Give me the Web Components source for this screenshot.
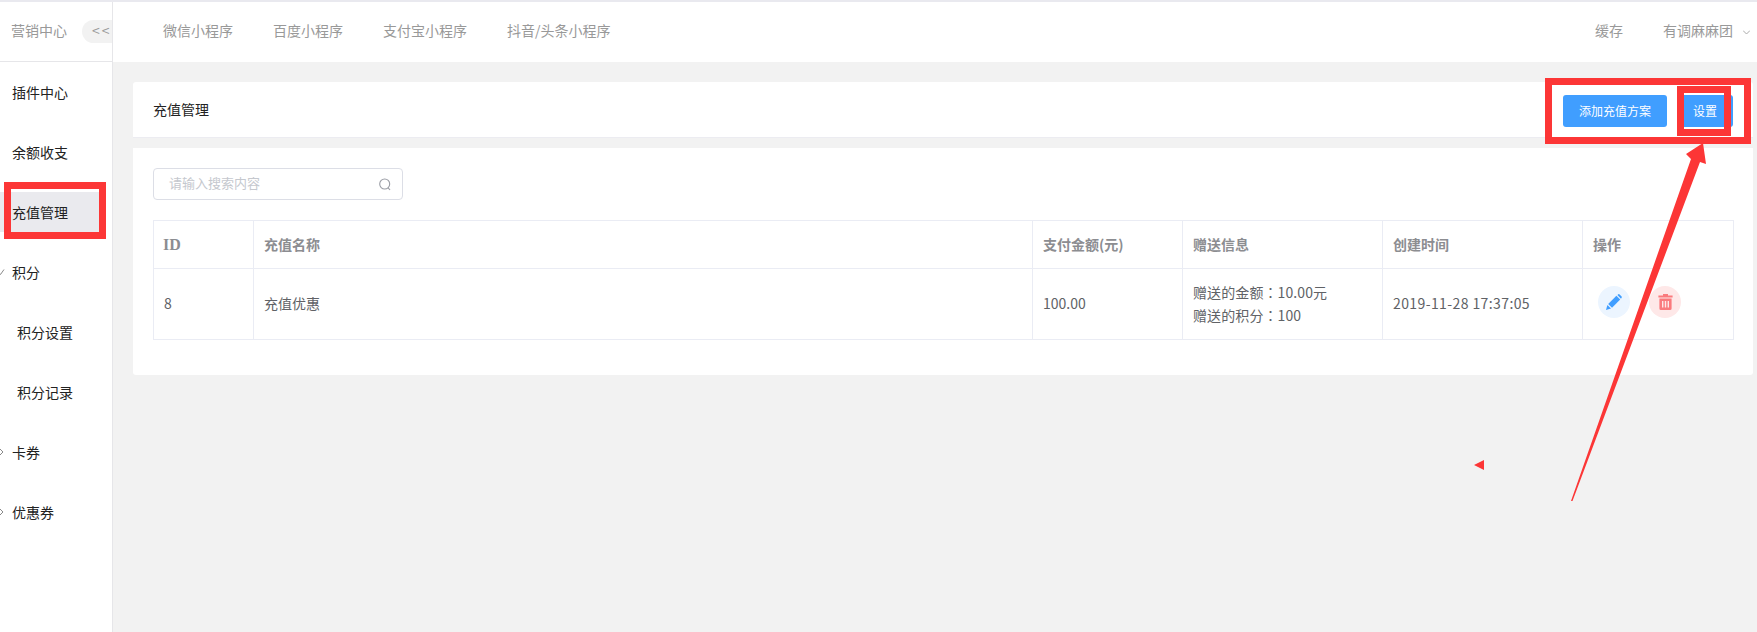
<!DOCTYPE html>
<html lang="zh">
<head>
<meta charset="utf-8">
<title>充值管理</title>
<style>
  html, body {
    margin: 0;
    height: 632px;
    overflow: hidden;
    background: #f2f2f2;
    font-family: "Noto Sans CJK SC", "Noto Sans", sans-serif;
    font-size: 14px;
  }
</style>
</head>
<body>
<app-shell>
  <side-bar slot="side">
    <side-item>插件中心</side-item>
    <side-item>余额收支</side-item>
    <side-item active>充值管理</side-item>
    <side-item arrow="down">积分</side-item>
    <side-item sub>积分设置</side-item>
    <side-item sub>积分记录</side-item>
    <side-item arrow="right">卡券</side-item>
    <side-item arrow="right">优惠券</side-item>
  </side-bar>
  <top-bar slot="top"></top-bar>
  <page-head>
    <span>充值管理</span>
    <blue-button slot="actions">添加充值方案</blue-button>
    <blue-button slot="actions">设置</blue-button>
  </page-head>
  <page-card>
    <search-box placeholder="请输入搜索内容"></search-box>
    <recharge-table></recharge-table>
  </page-card>
</app-shell>
<mark-up></mark-up>

<script>
const shellTemplate = document.createElement("template");
shellTemplate.innerHTML = /*html*/`
  <style>
    :host {
      display: flex;
      height: 630px;
      border-top: 2px solid #e9e9ef;
    }
    .right {
      flex: 1;
      min-width: 0;
      display: flex;
      flex-direction: column;
    }
    main {
      flex: 1;
      display: flex;
      flex-direction: column;
      gap: 10px;
      padding: 20px 4px 0 20px;
    }
  </style>
  <slot name="side"></slot>
  <div class="right">
    <slot name="top"></slot>
    <main><slot></slot></main>
  </div>`;

class AppShell extends HTMLElement {
  constructor() {
    super();
    this.attachShadow({ mode: "open" });
    this.shadowRoot.appendChild(shellTemplate.content.cloneNode(true));
  }
}
customElements.define("app-shell", AppShell);

const sideTemplate = document.createElement("template");
sideTemplate.innerHTML = /*html*/`
  <style>
    :host {
      display: block;
      width: 112px;
      flex: none;
      background: #fff;
      border-right: 1px solid #e6e6e9;
    }
    .head {
      height: 59px;
      box-sizing: content-box;
      border-bottom: 1px solid #e6e6e9;
      display: flex;
      align-items: center;
      justify-content: space-between;
      padding-left: 11px;
      color: #999;
    }
    .head > span:first-child {
      margin-bottom: 4px;
    }
    .fold {
      width: 30px;
      height: 23px;
      line-height: 21px;
      background: #f2f2f2;
      border-radius: 12px 0 0 12px;
      padding-left: 10px;
      box-sizing: border-box;
      font-size: 14px;
      letter-spacing: 2px;
      white-space: nowrap;
      margin-bottom: 1px;
    }
    .list {
      padding-top: 1px;
    }
  </style>
  <div class="head">
    <span>营销中心</span>
    <span class="fold">&lt;&lt;</span>
  </div>
  <div class="list"><slot></slot></div>`;

class SideBar extends HTMLElement {
  constructor() {
    super();
    this.attachShadow({ mode: "open" });
    this.shadowRoot.appendChild(sideTemplate.content.cloneNode(true));
  }
}
customElements.define("side-bar", SideBar);

const sideItemTemplate = document.createElement("template");
sideItemTemplate.innerHTML = /*html*/`
  <style>
    :host {
      display: flex;
      align-items: center;
      height: 60px;
      color: #222;
      position: relative;
    }
    .label {
      height: 40px;
      line-height: 38px;
      padding-left: 12px;
      width: 100px;
      box-sizing: border-box;
      margin-top: -1px;
    }
    :host([sub]) .label {
      padding-left: 17px;
    }
    :host([active]) .label {
      background: #eaeaee;
      margin-top: -2px;
      line-height: 41px;
    }
    svg {
      position: absolute;
      left: 0;
      top: 25px;
      display: none;
    }
    :host([arrow]) svg {
      display: block;
    }
  </style>
  <svg width="6" height="8" viewBox="0 0 6 8" fill="none" stroke="#8a8a8a" stroke-width="1"><path id="arrow" d=""/></svg>
  <div class="label"><slot></slot></div>`;

class SideItem extends HTMLElement {
  constructor() {
    super();
    this.attachShadow({ mode: "open" });
    this.shadowRoot.appendChild(sideItemTemplate.content.cloneNode(true));
  }

  connectedCallback() {
    const arrow = this.getAttribute("arrow");
    if (arrow) {
      this.shadowRoot.getElementById("arrow").setAttribute("d", arrow === "down" ? "M-2 3.5 L0.5 6.5 L4 1.5" : "M0 1 L3 4 L0 7");
    }
  }
}
customElements.define("side-item", SideItem);

const topTemplate = document.createElement("template");
topTemplate.innerHTML = /*html*/`
  <style>
    :host {
      display: flex;
      align-items: center;
      justify-content: space-between;
      height: 60px;
      box-sizing: border-box;
      flex: none;
      background: #fff;
      color: #999;
      padding: 0 7px 4px 50px;
    }
    .group {
      display: flex;
      align-items: center;
      gap: 40px;
    }
    .user {
      display: flex;
      align-items: center;
      gap: 10px;
    }
    .user svg {
      margin-top: 4px;
    }
  </style>
  <div class="group">
    <span>微信小程序</span>
    <span>百度小程序</span>
    <span>支付宝小程序</span>
    <span>抖音/头条小程序</span>
  </div>
  <div class="group">
    <span>缓存</span>
    <span class="user">
      <span>有调麻麻团</span>
      <svg width="7" height="5" viewBox="0 0 7 5" fill="none" stroke="#aaa" stroke-width="1"><path d="M0 0.5 L3.5 4 L7 0.5"/></svg>
    </span>
  </div>`;

class TopBar extends HTMLElement {
  constructor() {
    super();
    this.attachShadow({ mode: "open" });
    this.shadowRoot.appendChild(topTemplate.content.cloneNode(true));
  }
}
customElements.define("top-bar", TopBar);

const headTemplate = document.createElement("template");
headTemplate.innerHTML = /*html*/`
  <style>
    :host {
      display: flex;
      align-items: center;
      justify-content: space-between;
      height: 55px;
      flex: none;
      background: #fff;
      border-radius: 3px 3px 0 0;
      border-bottom: 1px solid #ececf1;
      padding: 0 20px;
      color: #222;
    }
    ::slotted(span) {
      margin-bottom: 2px;
    }
    .actions {
      display: flex;
      gap: 10px;
      margin-top: 3px;
    }
  </style>
  <slot></slot>
  <div class="actions"><slot name="actions"></slot></div>`;

class PageHead extends HTMLElement {
  constructor() {
    super();
    this.attachShadow({ mode: "open" });
    this.shadowRoot.appendChild(headTemplate.content.cloneNode(true));
  }
}
customElements.define("page-head", PageHead);

const buttonTemplate = document.createElement("template");
buttonTemplate.innerHTML = /*html*/`
  <style>
    :host {
      display: block;
      height: 32px;
      line-height: 31px;
      padding: 0 16px;
      background: #409eff;
      border-radius: 3px;
      color: #fff;
      font-size: 12px;
    }
  </style>
  <slot></slot>`;

class BlueButton extends HTMLElement {
  constructor() {
    super();
    this.attachShadow({ mode: "open" });
    this.shadowRoot.appendChild(buttonTemplate.content.cloneNode(true));
  }
}
customElements.define("blue-button", BlueButton);

const cardTemplate = document.createElement("template");
cardTemplate.innerHTML = /*html*/`
  <style>
    :host {
      display: flex;
      flex-direction: column;
      gap: 20px;
      height: 187px;
      flex: none;
      background: #fff;
      border-radius: 0 0 3px 3px;
      padding: 20px;
    }
  </style>
  <slot></slot>`;

class PageCard extends HTMLElement {
  constructor() {
    super();
    this.attachShadow({ mode: "open" });
    this.shadowRoot.appendChild(cardTemplate.content.cloneNode(true));
  }
}
customElements.define("page-card", PageCard);

const searchTemplate = document.createElement("template");
searchTemplate.innerHTML = /*html*/`
  <style>
    :host {
      display: flex;
      align-items: center;
      justify-content: space-between;
      width: 250px;
      height: 32px;
      box-sizing: border-box;
      border: 1px solid #dcdee6;
      border-radius: 4px;
      padding: 0 11px 0 15px;
      color: #c5c8ce;
      font-size: 13px;
    }
    #hint {
      margin-bottom: 3px;
    }
  </style>
  <span id="hint"></span>
  <svg width="12" height="13" viewBox="0 0 12 13" fill="none" stroke="#9a9da5" stroke-width="1.1">
    <circle cx="5.7" cy="6" r="5"/>
    <path d="M9.2 9.8 L11 12"/>
  </svg>`;

class SearchBox extends HTMLElement {
  constructor() {
    super();
    this.attachShadow({ mode: "open" });
    this.shadowRoot.appendChild(searchTemplate.content.cloneNode(true));
  }

  connectedCallback() {
    this.shadowRoot.getElementById("hint").textContent = this.getAttribute("placeholder");
  }
}
customElements.define("search-box", SearchBox);

const tableTemplate = document.createElement("template");
tableTemplate.innerHTML = /*html*/`
  <style>
    :host {
      display: block;
    }
    table {
      width: 1580px;
      table-layout: fixed;
      border-collapse: collapse;
      color: #606266;
    }
    th, td {
      border: 1px solid #eaecf4;
      padding: 0 0 0 10px;
      text-align: left;
      box-sizing: border-box;
    }
    th {
      height: 48px;
      padding-bottom: 2px;
      color: #8c8d91;
      font-weight: 700;
    }
    td {
      height: 71px;
      line-height: 23px;
      padding-bottom: 2px;
    }
    th.id {
      font-family: "Liberation Serif", serif;
      font-size: 16px;
      padding-left: 9px;
      padding-bottom: 0;
    }
    .gift {
      padding-bottom: 0;
      letter-spacing: 0.1px;
    }
    .gift i {
      font-style: normal;
      font-family: "Noto Sans CJK TC", sans-serif;
    }
    .time {
      letter-spacing: 0.4px;
    }
    .op-cell {
      padding-bottom: 0;
    }
    .ops {
      display: flex;
      gap: 19px;
      padding-left: 5px;
      margin-bottom: 5px;
    }
  </style>
  <table>
    <colgroup>
      <col style="width:100px">
      <col style="width:779px">
      <col style="width:150px">
      <col style="width:200px">
      <col style="width:200px">
      <col style="width:151px">
    </colgroup>
    <thead>
      <tr>
        <th class="id">ID</th>
        <th>充值名称</th>
        <th>支付金额(元)</th>
        <th>赠送信息</th>
        <th>创建时间</th>
        <th>操作</th>
      </tr>
    </thead>
    <tbody>
      <tr>
        <td>8</td>
        <td>充值优惠</td>
        <td>100.00</td>
        <td class="gift">赠送的金额<i lang="zh-TW">：</i>10.00元<br>赠送的积分<i lang="zh-TW">：</i>100</td>
        <td class="time">2019-11-28 17:37:05</td>
        <td class="op-cell">
          <div class="ops">
            <round-button kind="edit"></round-button>
            <round-button kind="delete"></round-button>
          </div>
        </td>
      </tr>
    </tbody>
  </table>`;

class RechargeTable extends HTMLElement {
  constructor() {
    super();
    this.attachShadow({ mode: "open" });
    this.shadowRoot.appendChild(tableTemplate.content.cloneNode(true));
  }
}
customElements.define("recharge-table", RechargeTable);

const roundIcons = {
  edit: `<svg width="16" height="16" viewBox="0 0 16 16" fill="#409eff">
      <path d="M0 16 L1.4 11 L5 14.6 Z"/>
      <path d="M2.2 10 L10.4 1.8 L14.2 5.6 L6 13.8 Z"/>
      <path d="M11.4 0.9 L12.4 0.2 Q13 -0.1 13.6 0.4 L15.6 2.4 Q16.1 3 15.7 3.6 L15 4.7 Z"/>
    </svg>`,
  delete: `<svg width="15" height="16" viewBox="0 0 15 16" fill="#fa7a7d">
      <path d="M5 0 H10 V1.6 H14.6 V3.4 H0.4 V1.6 H5 Z"/>
      <path fill-rule="evenodd" d="M1.4 4.6 H13.6 V14.5 Q13.6 16 12 16 H3 Q1.4 16 1.4 14.5 Z M4 7 V13.6 H5.4 V7 Z M6.8 7 V13.6 H8.2 V7 Z M9.6 7 V13.6 H11 V7 Z"/>
    </svg>`
};

class RoundButton extends HTMLElement {
  constructor() {
    super();
    this.attachShadow({ mode: "open" });
  }

  connectedCallback() {
    const kind = this.getAttribute("kind");
    this.shadowRoot.innerHTML = `
      <style>
        :host {
          display: flex;
          align-items: center;
          justify-content: center;
          width: 32px;
          height: 32px;
          border-radius: 50%;
          background: ${kind === "edit" ? "#ecf5ff" : "#fee8e8"};
        }
      </style>
      ${roundIcons[kind]}`;
  }
}
customElements.define("round-button", RoundButton);

// the red boxes and the arrow someone drew over the screenshot
const markTemplate = document.createElement("template");
markTemplate.innerHTML = /*html*/`
  <style>
    :host {
      position: absolute;
      left: 0;
      top: 0;
      width: 1757px;
      height: 632px;
      pointer-events: none;
    }
    svg {
      display: block;
    }
  </style>
  <svg width="1757" height="632" viewBox="0 0 1757 632" fill="none">
    <rect x="7.5" y="185.5" width="95" height="50" stroke="#fc3636" stroke-width="7"/>
    <rect x="1548.5" y="81.5" width="199" height="59" stroke="#fc3636" stroke-width="7"/>
    <rect x="1680.5" y="89.5" width="47" height="43" stroke="#fc3636" stroke-width="7"/>
    <polygon fill="#fc3636" points="1703,143 1706,164 1700,162 1572.5,501 1571,501 1691,159 1686,154"/>
    <polygon fill="#fc3636" points="1474,465 1484,460 1484,470"/>
  </svg>`;

class MarkUp extends HTMLElement {
  constructor() {
    super();
    this.attachShadow({ mode: "open" });
    this.shadowRoot.appendChild(markTemplate.content.cloneNode(true));
  }
}
customElements.define("mark-up", MarkUp);
</script>
</body>
</html>
